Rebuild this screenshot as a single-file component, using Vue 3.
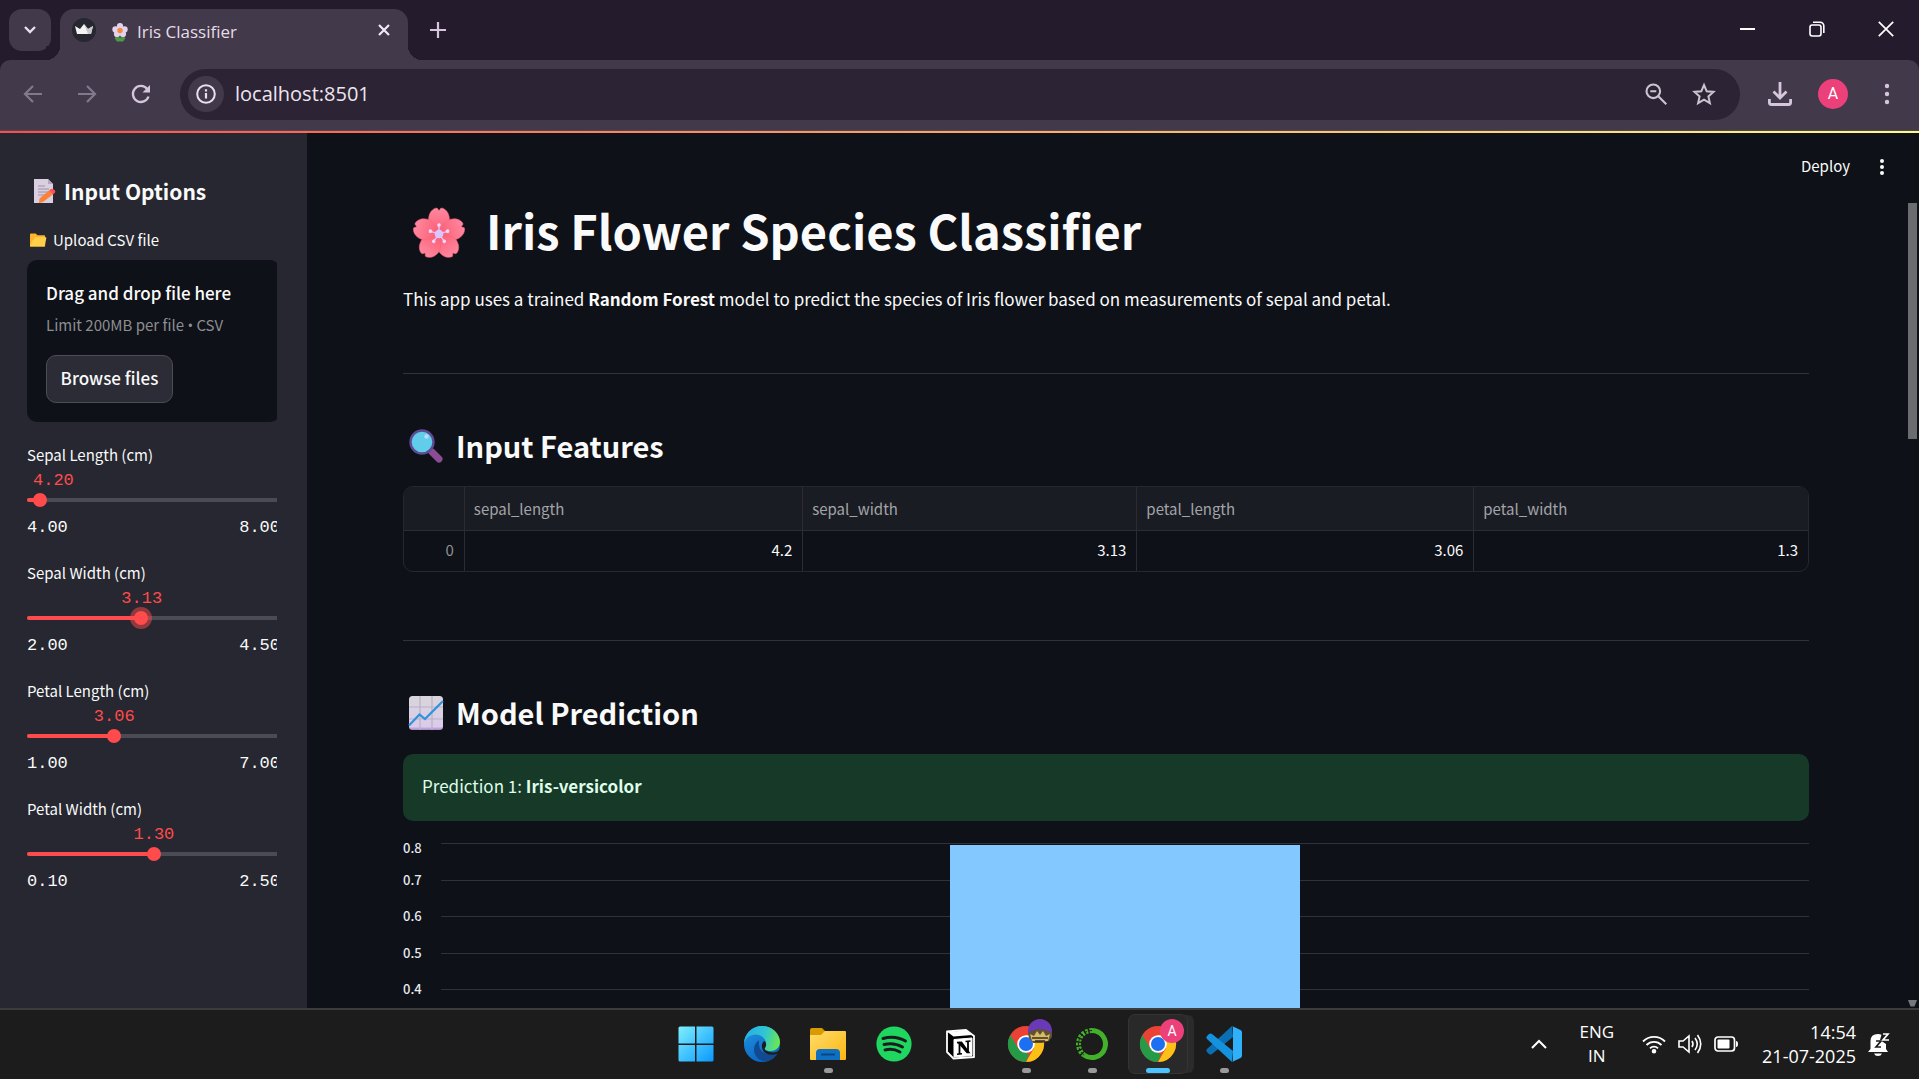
<script setup>
import { reactive } from 'vue'

const sliders = reactive([
  { id: 'sepal-length', label: 'Sepal Length (cm)', min: 4, max: 8, value: 4.2 },
  { id: 'sepal-width', label: 'Sepal Width (cm)', min: 2, max: 4.5, value: 3.13, active: true },
  { id: 'petal-length', label: 'Petal Length (cm)', min: 1, max: 7, value: 3.06 },
  { id: 'petal-width', label: 'Petal Width (cm)', min: 0.1, max: 2.5, value: 1.3 },
])
const pct = (s) => ((s.value - s.min) / (s.max - s.min)) * 100
const fixed = (n) => Number(n).toFixed(2)

const columns = ['sepal_length', 'sepal_width', 'petal_length', 'petal_width']
const row = ['4.2', '3.13', '3.06', '1.3']
const ticks = ['0.8', '0.7', '0.6', '0.5', '0.4', '0.3', '0.2', '0.1']
const petals = [0, 72, 144, 216, 288]
</script>

<template>
  <div class="screen">
    <header class="tabstrip">
      <button class="tab-search" aria-label="Search tabs">
        <svg width="14" height="10" viewBox="0 0 14 10"><path d="M2 2l5 5 5-5" fill="none" stroke="#e8e0ee" stroke-width="2.4" /></svg>
      </button>
      <div class="tab">
        <svg width="24" height="24" viewBox="0 0 24 24">
          <circle cx="12" cy="12" r="12" fill="#262730" />
          <path d="M3 8l5 3 4-5 4 5 5-3-2 8H5z" fill="#f4f4f4" />
          <path d="M12 6l4 5 5-3-2 8h-3z" fill="#c9c9cb" />
        </svg>
        <svg class="tab-flower" width="16" height="18" viewBox="0 0 16 18">
          <path d="M8 11v6M3 15q3-2 5 1 2-3 5-1l-2 3H5z" fill="#4d9a45" stroke="#4d9a45" />
          <g fill="#e3d3ef"><circle cx="8" cy="3.2" r="3.1" /><circle cx="12.6" cy="6.4" r="3.1" /><circle cx="11" cy="11" r="3.1" /><circle cx="5" cy="11" r="3.1" /><circle cx="3.4" cy="6.4" r="3.1" /></g>
          <circle cx="8" cy="7.5" r="2.7" fill="#f58a3c" />
        </svg>
        <span class="tab-title">Iris Classifier</span>
        <button class="bare tab-close" aria-label="Close tab">
          <svg width="12" height="12" viewBox="0 0 12 12"><path d="M1 1l10 10M11 1L1 11" stroke="#f0eaf4" stroke-width="2.2" /></svg>
        </button>
      </div>
      <button class="bare new-tab" aria-label="New tab">
        <svg width="16" height="16" viewBox="0 0 16 16"><path d="M8 0v16M0 8h16" stroke="#d5c6dd" stroke-width="2.2" /></svg>
      </button>
      <div class="window-buttons">
        <button class="bare" aria-label="Minimize"><svg width="16" height="16" viewBox="0 0 16 16"><path d="M0 8h15" stroke="#fff" stroke-width="2" /></svg></button>
        <button class="bare" aria-label="Restore"><svg width="16" height="16" viewBox="0 0 16 16" fill="none" stroke="#fff" stroke-width="1.6"><rect x="1" y="4" width="11" height="11" rx="2.2" /><path d="M4 1.2h7.2a3.6 3.6 0 0 1 3.6 3.6V12" /></svg></button>
        <button class="bare" aria-label="Close"><svg width="16" height="16" viewBox="0 0 16 16"><path d="M.8.8l14.4 14.4M15.2.8L.8 15.2" stroke="#fff" stroke-width="1.7" /></svg></button>
      </div>
    </header>

    <nav class="toolbar">
      <button class="bare nav" aria-label="Back"><svg width="20" height="20" viewBox="0 0 20 20"><path d="M19 10H2.5M10 2L2 10l8 8" fill="none" stroke="#84798c" stroke-width="2.2" /></svg></button>
      <button class="bare nav" aria-label="Forward"><svg width="20" height="20" viewBox="0 0 20 20"><path d="M1 10h16.500M10 2l8 8-8 8" fill="none" stroke="#84798c" stroke-width="2.2" /></svg></button>
      <button class="bare nav" aria-label="Reload"><svg width="20" height="20" viewBox="0 0 20 20"><path d="M17.500 12.500A8 8 0 1 1 16.200 5" fill="none" stroke="#d5c6dd" stroke-width="2.300" /><path d="M19 1v7.500h-7.500z" fill="#d5c6dd" /></svg></button>
      <div class="address">
        <button class="bare site-info" aria-label="Site information"><svg width="20" height="20" viewBox="0 0 20 20"><circle cx="10" cy="10" r="8.800" fill="none" stroke="#e8e0ee" stroke-width="2" /><path d="M10 9v5.500M10 5.200v2.200" stroke="#e8e0ee" stroke-width="2.200" /></svg></button>
        <input class="url" type="text" value="localhost:8501" aria-label="Address" />
        <button class="bare" aria-label="Zoom"><svg width="22" height="22" viewBox="0 0 22 22" fill="none" stroke="#cbc3d0"><circle cx="8.300" cy="8.300" r="6.800" stroke-width="2.100" /><path d="M5.300 8.300h6M13.300 13.300l8 8" stroke-width="2.100" /></svg></button>
        <button class="bare" aria-label="Bookmark"><svg width="24" height="24" viewBox="0 0 24 24"><path d="M12 3l2.700 6.300 6.800.600-5.100 4.500 1.500 6.700-5.900-3.500-5.900 3.500 1.500-6.700-5.100-4.500 6.800-.600z" fill="none" stroke="#cbc3d0" stroke-width="2" /></svg></button>
      </div>
      <button class="bare download" aria-label="Downloads"><svg width="24" height="24" viewBox="0 0 24 24" fill="none" stroke="#d5c6dd" stroke-width="2.800"><path d="M12 0v15M5.500 9.500L12 16l6.500-6.500M1.400 17v3.500a2 2 0 0 0 2 2h17.200a2 2 0 0 0 2-2V17" /></svg></button>
      <button class="profile" aria-label="Profile">A</button>
      <button class="bare" aria-label="Menu"><svg width="6" height="22" viewBox="0 0 6 22" fill="#d5c6dd"><circle cx="3" cy="3" r="2.200" /><circle cx="3" cy="11" r="2.200" /><circle cx="3" cy="19" r="2.200" /></svg></button>
    </nav>
    <div class="rainbow"></div>

    <div class="app">
      <aside class="sidebar">
        <div class="clip">
          <div class="side-content">
            <h2 class="side-title">
              <svg width="22" height="24" viewBox="0 0 22 24">
                <path d="M0 0h14l5 5v19H0z" fill="#d9cfe1" /><path d="M14 0l5 5h-5z" fill="#b4a6c2" />
                <path d="M4 10h11M4 13h11M4 16h8M4 7h7" stroke="#9c92a8" />
                <path d="M5.500 19.500L15 11.500l3.800 4L9 23l-4 1z" fill="#fb8237" /><path d="M15 11.500l2-1.600q2-.4 4 1.600.800 1.400-.300 2.400l-1.900 1.600z" fill="#ff5257" />
              </svg>
              Input Options
            </h2>
            <label class="upload-label" for="csv-button">
              <svg width="17" height="14" viewBox="0 0 18 14"><path d="M1 0h5l2 2h7q1 0 1 1v11H0V1q0-1 1-1z" fill="#fdb52b" /><path d="M5 4h11.500q1 0 .8 1l-1.600 8q-.2 1-1 1H1q-1 0-.8-1L3 7h1z" fill="#ffcf4a" /></svg>
              Upload CSV file
            </label>
            <section class="uploader">
              <p class="drag">Drag and drop file here</p>
              <p class="limit">Limit 200MB per file <span class="dot">•</span> CSV</p>
              <button id="csv-button" class="browse">Browse files</button>
            </section>
            <div v-for="s in sliders" :key="s.id" class="slider">
              <label :for="s.id">{{ s.label }}</label>
              <output :for="s.id" :style="{ marginLeft: `calc(max(26px, ${pct(s)}%) - 20px)` }">{{ fixed(s.value) }}</output>
              <div class="rail">
                <div class="track"><div class="fill" :style="{ width: pct(s) + '%' }"></div></div>
                <input :id="s.id" v-model.number="s.value" type="range" :class="{ active: s.active }" :min="s.min" :max="s.max" step="0.01" />
              </div>
              <div class="bounds"><span>{{ fixed(s.min) }}</span><span>{{ fixed(s.max) }}</span></div>
            </div>
          </div>
        </div>
      </aside>

      <main class="main">
        <div class="app-header">
          <button class="bare deploy">Deploy</button>
          <button class="bare" aria-label="App menu"><svg width="6" height="18" viewBox="0 0 6 18" fill="#fafafa"><circle cx="3" cy="3" r="2" /><circle cx="3" cy="9" r="2" /><circle cx="3" cy="15" r="2" /></svg></button>
        </div>
        <div class="scroller">
          <div class="page">
            <h1>
              <svg width="54" height="54" viewBox="-27 -31 54 54">
                <defs><linearGradient id="petal" x1="0" y1="0" x2="0" y2="1"><stop offset="0" stop-color="#ff88a0" /><stop offset="1" stop-color="#fb5d72" /></linearGradient></defs>
                <path v-for="a in petals" :key="a" :transform="`rotate(${a})`" d="M0 0C-7-5-12-12-10-18-9-23-5-26-2-26L0-23.500 2-26C5-26 9-23 10-18 12-12 7-5 0 0z" fill="url(#petal)" stroke="#f4647f" stroke-width=".5" />
                <g v-for="a in petals" :key="'s' + a" :transform="`rotate(${a})`"><path d="M0 0v-8" stroke="#e2c6ff" stroke-width="1.300" /><circle cy="-9" r="1.800" fill="#f0d9ff" /></g>
                <circle r="4.300" fill="#dcc5ff" />
              </svg>
              Iris Flower Species Classifier
            </h1>
            <p class="intro">This app uses a trained <strong>Random Forest</strong> model to predict the species of Iris flower based on measurements of sepal and petal.</p>
            <hr />
            <h2>
              <svg width="34" height="34" viewBox="0 -1 34 34">
                <path d="M23 23l7 7" stroke="#8b4c93" stroke-width="7" stroke-linecap="round" />
                <circle cx="13" cy="13" r="11.500" fill="#62cdeb" stroke="#5d4b93" stroke-width="2.400" />
                <circle cx="17.500" cy="7.500" r="2.200" fill="#b9dcfa" />
              </svg>
              Input Features
            </h2>
            <div class="table-frame">
              <table>
                <colgroup><col class="c-index" /><col class="c-a" /><col class="c-b" /><col class="c-c" /><col /></colgroup>
                <thead><tr><th></th><th v-for="c in columns" :key="c" scope="col">{{ c }}</th></tr></thead>
                <tbody><tr><td class="index">0</td><td v-for="(v, i) in row" :key="i">{{ v }}</td></tr></tbody>
              </table>
            </div>
            <hr class="after-block" />
            <h2>
              <svg width="34" height="34" viewBox="0 -1 34 34">
                <defs><linearGradient id="sheet" x1="0" y1="0" x2="0" y2="1"><stop offset="0" stop-color="#d9d5dc" /><stop offset=".9" stop-color="#dacbea" /><stop offset="1" stop-color="#a887c8" /></linearGradient></defs>
                <rect width="34" height="34" rx="3.500" fill="url(#sheet)" />
                <path d="M11 0v34M23 0v34M0 11h34M0 23h34" stroke="#b9b1c2" stroke-width="1.200" />
                <path d="M0 29.500l10.500-11 5.500 4.500L34 5" fill="none" stroke="#2f93dc" stroke-width="2.200" />
              </svg>
              Model Prediction
            </h2>
            <div class="alert" role="alert">Prediction 1: <strong>Iris-versicolor</strong></div>
            <div class="chart">
              <div v-for="t in ticks" :key="t" class="chart-row"><span>{{ t }}</span><i></i></div>
              <div class="plot"><div class="bar"></div></div>
            </div>
          </div>
          <div class="scrollbar">
            <div class="thumb"></div>
            <svg width="10" height="8" viewBox="0 0 10 8"><path d="M0 0h9L6.500 6.500h-4z" fill="#77787c" /></svg>
          </div>
        </div>
      </main>
    </div>

    <footer class="taskbar">
      <span></span>
      <div class="apps">
        <button class="bare task" aria-label="Start"><svg width="36" height="36" viewBox="0 0 36 36"><defs><linearGradient id="win" x1="0" y1="0" x2="1" y2="1"><stop offset="0" stop-color="#7df0fd" /><stop offset="1" stop-color="#0a98ff" /></linearGradient></defs><path d="M2 0.500h15v17H.500V2q0-1.500 1.500-1.500zM18.500.500h15.500q1.500 0 1.500 1.500v15.500h-17zM.500 19h16.500v16.500H2q-1.500 0-1.500-1.500zM18.500 19h17v15q0 1.500-1.500 1.500H18.500z" fill="url(#win)" /></svg></button>
        <button class="bare task" aria-label="Edge"><svg width="36" height="36" viewBox="0 0 36 36">
          <defs>
            <linearGradient id="edgeTop" x1="0" y1=".3" x2="1" y2=".5"><stop offset="0" stop-color="#2aaee6" /><stop offset=".55" stop-color="#2fc5d3" /><stop offset="1" stop-color="#6be84f" /></linearGradient>
            <linearGradient id="edgeBody" x1="0" y1="0" x2=".5" y2="1"><stop offset="0" stop-color="#2196e0" /><stop offset="1" stop-color="#0b65c4" /></linearGradient>
          </defs>
          <circle cx="18" cy="18" r="18" fill="url(#edgeBody)" />
          <path d="M0 18C0 8 8 0 18 0s18 7.500 18 16c0 6-5 9-9.500 9-4 0-6.500-1.500-6.500-2.500 0-.8 2-1.500 2-5 0-5-5-9-10.500-9S1.500 12 0 18z" fill="url(#edgeTop)" />
          <path d="M15 14c-4 3-6 8-4.500 13 1.500 5 6.500 8.500 11.500 8.500 6-1 10-5 12-9-2 1-5 1.500-8 1.500-7 0-12-4-11-14z" fill="#124a91" />
          <path d="M20.500 15c2 2 2 4 1 6-1 1.500-1.500 2.500 1.500 4 5 2.500 10 1.500 13-1.500l1 2-3 2c-8 3-15 0-16-6-.5-3 .5-5.500 2.500-6.500z" fill="#1c1c1c" />
        </svg></button>
        <button class="bare task running" aria-label="File Explorer"><svg width="36" height="36" viewBox="0 0 36 36"><defs><linearGradient id="fold" x1="0" y1="0" x2="1" y2="1"><stop offset="0" stop-color="#ffdc6c" /><stop offset="1" stop-color="#fbb610" /></linearGradient></defs><path d="M0 4q0-2 2-2h10l3 3v6H0z" fill="#d99b00" /><path d="M0 9h11l4-4h20q1 0 1 1v27q0 1-1 1H1q-1 0-1-1z" fill="url(#fold)" /><path d="M6 34v-7q0-4 4-4h16q4 0 4 4v7z" fill="#0f6fc0" /><path d="M11 28.500h14" stroke="#0a4684" stroke-width="2" /></svg></button>
        <button class="bare task" aria-label="Spotify"><svg width="36" height="36" viewBox="0 0 36 36"><circle cx="18" cy="18" r="17.600" fill="#1fd760" /><path d="M7 12.500q12-3.500 22.500 2.500M8 18.500q10-2.500 18.500 2.500M9 24q8-2 15 2" fill="none" stroke="#1c1c1c" stroke-width="3" stroke-linecap="round" /></svg></button>
        <button class="bare task" aria-label="Notion"><svg width="30" height="32" viewBox="0 0 30 32"><path d="M2 3.500L21 2l8 6v21l-20.500 1.500L2 24z" fill="#000" stroke="#fff" stroke-width="1.800" stroke-linejoin="round" /><path d="M2.500 4L21 2.500l6 4.500-18.500 1.500z" fill="#fff" /><path d="M9 11.500l18-1.500v17.500L9 29z" fill="#fff" stroke="#fff" stroke-linejoin="round" /><path d="M14.500 15v11M23 13.500v11" stroke="#000" stroke-width="1.800" /><path d="M13.500 14.500l3-.2 7.500 10.200h-2z" fill="#000" stroke="#000" stroke-width="1.500" /><path d="M12 26.200l5-.400M20.500 13.500l5-.400M12 14.800l3-.2" stroke="#000" stroke-width="1.500" /></svg></button>
        <button class="bare task running" aria-label="Chrome, first profile"><svg width="36" height="36" viewBox="0 0 36 36"><circle cx="18" cy="18" r="18" fill="#ea4335" /><path d="M18 36A18 18 0 0 0 33.600 9H18l7.800 13.500z" fill="#fbc116" /><path d="M2.400 9l7.800 13.500L18 27l3 1-3 8A18 18 0 0 1 2.400 9z" fill="#259b48" /><circle cx="18" cy="18" r="8.800" fill="#fff" /><circle cx="18" cy="18" r="7" fill="#1b6ff0" /></svg>
          <svg class="badge-icon" width="26" height="26" viewBox="0 0 26 26"><circle cx="13" cy="13" r="12" fill="#6a39b5" /><path d="M1 15q12-8 24 0v4l-3 4-8 2H6l-4-5z" fill="#5f5138" /><path d="M3 16l4 2 3-5 3 4 3-4 3 5 4-2-2 7H5z" fill="#d8bd63" /><path d="M5 20h16M8 23h10" stroke="#3d2c24" stroke-width="1.500" /></svg></button>
        <button class="bare task running" aria-label="Anaconda"><svg width="34" height="34" viewBox="0 0 34 34"><path d="M17 3.500a13.500 13.500 0 1 1-8 24.400" fill="none" stroke="#43b02a" stroke-width="5" /><path d="M17 3.500A13.500 13.500 0 0 0 9 27.900" fill="none" stroke="#43b02a" stroke-width="5" stroke-dasharray="2.500 1.500" /><path d="M17 3.500A13.500 13.500 0 0 0 9 27.900" fill="none" stroke="#1c1c1c" stroke-width="1" stroke-dasharray="3 2" /></svg></button>
        <button class="bare task running current" aria-label="Chrome"><svg width="36" height="36" viewBox="0 0 36 36"><circle cx="18" cy="18" r="18" fill="#ea4335" /><path d="M18 36A18 18 0 0 0 33.600 9H18l7.800 13.500z" fill="#fbc116" /><path d="M2.400 9l7.800 13.500L18 27l3 1-3 8A18 18 0 0 1 2.400 9z" fill="#259b48" /><circle cx="18" cy="18" r="8.800" fill="#fff" /><circle cx="18" cy="18" r="7" fill="#1b6ff0" /></svg>
          <span class="badge">A</span></button>
        <button class="bare task running" aria-label="VS Code"><svg width="36" height="36" viewBox="0 0 36 36"><path d="M26 0L1 23q-1.500 1.500 0 3l2 2q1.500 1 3 0L27 11z" fill="#0b6fb4" /><path d="M26 36L1 13q-1.500-1.500 0-3l2-2q1.500-1 3 0L27 25z" fill="#1592dd" /><path d="M26 0l8.500 4q1.500.8 1.500 2.500v23q0 1.700-1.500 2.500L26 36q1 0 1-3V3q0-3-1-3z" fill="#2fb0f8" /></svg></button>
      </div>
      <div class="tray">
        <button class="bare" aria-label="Show hidden icons"><svg width="16" height="10" viewBox="0 0 16 10"><path d="M1 9l7-7 7 7" fill="none" stroke="#fff" stroke-width="2" /></svg></button>
        <div class="lang">ENG<br />IN</div>
        <div class="status">
          <svg width="24" height="20" viewBox="0 0 24 20" fill="none" stroke="#fff" stroke-width="1.800"><path d="M1 7.500a15.500 15.500 0 0 1 22 0M4.500 11a10.500 10.500 0 0 1 15 0M8 14.300a5.600 5.600 0 0 1 8 0" /><circle cx="12" cy="17.300" r="1.400" fill="#fff" /></svg>
          <svg width="24" height="20" viewBox="0 0 24 20" fill="none" stroke="#fff" stroke-width="1.600"><path d="M1 7h4l6-5v16l-6-5H1zM14 7q2 3 0 6M17 4q4.500 6 0 12M19.500 1q6.500 9 0 18" /></svg>
          <svg width="24" height="16" viewBox="0 0 24 16"><rect x="1" y="1" width="19.500" height="14" rx="3" fill="none" stroke="#fff" stroke-width="1.700" /><rect x="3.500" y="3.500" width="12" height="9" rx="1" fill="#fff" /><path d="M22 5v6q2 0 2-3t-2-3z" fill="#fff" /></svg>
        </div>
        <div class="clock">14:54<br />21-07-2025</div>
        <svg width="22" height="24" viewBox="0 0 22 24"><path d="M2.500 17V9q0-7 7.500-7 2 0 3.500.700L12 8l6 4v5l2 3H0z" fill="#fff" /><path d="M6 21.500h8q-1 2.500-4 2.500t-4-2.500z" fill="#fff" /><path d="M8 9h5l-5 6h5" fill="none" stroke="#1c1c1c" stroke-width="1.700" /><path d="M15 2h5l-5 6h6" fill="none" stroke="#fff" stroke-width="1.700" /></svg>
      </div>
    </footer>
  </div>
</template>

<style>
body { background: #0e1117; }
</style>

<style scoped>
* { box-sizing: border-box; }
.screen {
  display: flex; flex-direction: column; height: 100vh; overflow: hidden;
  font-family: "Noto Sans CJK SC", "Open Sans", sans-serif; color: #fafafa; background: #0e1117;
}
h1, h2, p { margin: 0; }
button, input { font: inherit; color: inherit; }
svg { display: block; flex: none; overflow: visible; }
.bare { display: flex; align-items: center; justify-content: center; padding: 0; border: 0; background: none; }

/* browser chrome */
.tabstrip { position: relative; z-index: 1; display: flex; flex: none; height: 60px; padding: 9px 25px 0 9px; background: #241c2d; font-family: "Open Sans", sans-serif; }
.tab-search { display: flex; align-items: center; justify-content: center; width: 42px; height: 42px; border: 0; border-radius: 13px; background: #42394a; }
.tab { position: relative; display: flex; align-items: center; width: 348px; height: 51px; margin-left: 9px; padding: 0 18px 9px 12px; border-radius: 14px 14px 0 0; background: #42394a; }
.tab::before, .tab::after { content: ""; position: absolute; bottom: 0; width: 14px; height: 14px; }
.tab::before { left: -14px; background: radial-gradient(circle at 0 0, #241c2d 14px, #42394a 14px); }
.tab::after { right: -14px; background: radial-gradient(circle at 100% 0, #241c2d 14px, #42394a 14px); }
.tab-flower { margin: 4px 9px 0 16px; }
.tab-title { flex: 1; font-size: 17px; line-height: 24px; margin-top: 3px; color: #e4dde9; }
.new-tab { height: 42px; margin-left: 22px; }
.window-buttons { display: flex; gap: 53px; height: 40px; margin-left: auto; }
.toolbar { display: flex; align-items: center; flex: none; height: 71px; padding: 0 29px 2px 23px; background: #42394a; border-bottom: 1px solid #4d4653; border-radius: 10px 10px 0 0; box-shadow: 0 -10px #241c2d; }
.nav { width: 20px; margin-right: 34px; }
.nav + .nav + .nav { margin-right: 29px; }
.address { display: flex; align-items: center; flex: 1; height: 51px; padding: 0 24px 0 8px; border-radius: 26px; background: #2c2334; gap: 25px; }
.site-info { width: 36px; height: 36px; border-radius: 50%; background: #42394a; }
.url { flex: 1; min-width: 0; margin-left: -14px; padding: 0; border: 0; outline: 0; background: none; font: 20px/26px "Open Sans", sans-serif; color: #ece6f0; }
.download { margin-left: 28px; }
.profile { width: 30px; height: 30px; margin: 0 36px 0 26px; padding: 0; border: 0; border-radius: 50%; background: #ec407a; color: #fff; font: 16px/30px Roboto, sans-serif; }
.rainbow { flex: none; height: 2px; background: linear-gradient(90deg, #ff4b4b, #fffd80); }

/* application */
.app { display: flex; flex: 1; min-height: 0; }
.sidebar { flex: none; width: 307px; padding: 42px 30px 0 27px; background: #262730; overflow: hidden; }
.clip { overflow: hidden; }
.side-content { width: calc(100% + 3px); }
.side-title { display: flex; align-items: center; gap: 8px; padding-left: 7px; font-size: 21px; line-height: 32px; font-weight: 600; }
.upload-label { display: flex; align-items: center; gap: 6px; margin: 21px 0 8px; padding-left: 3px; font-size: 15px; line-height: 24px; }
.uploader { padding: 21px 19px 19px; border-radius: 10px; background: #0e1117; }
.drag, .browse { font-weight: 500; }
.drag { font-size: 17px; line-height: 24px; }
.limit { margin-top: 8px; font-size: 15px; line-height: 24px; color: #8d8e92; }
.dot { font-family: "Open Sans", sans-serif; }
.browse { display: block; width: 127px; height: 48px; margin-top: 18px; padding: 0 0 4px; border: 1px solid #4b4c55; border-radius: 10px; background: #2b2c36; font-size: 17px; white-space: nowrap; }
.slider { height: 97px; margin-top: 21px; }
.slider label { display: block; font-size: 15px; line-height: 24px; }
.slider output { display: block; margin-top: 3px; color: #ff4b4b; line-height: 22px; }
.slider output, .bounds { font-family: "Liberation Mono", monospace; font-size: 17px; }
.rail { position: relative; height: 14px; padding-top: 5px; margin-top: 1px; }
.track { height: 4px; border-radius: 2px; background: #4a4b55; overflow: hidden; }
.fill { height: 4px; background: #ff4b4b; }
.rail input { position: absolute; top: 0; left: -7px; width: calc(100% + 14px); height: 14px; margin: 0; appearance: none; background: none; }
.rail input::-webkit-slider-thumb { appearance: none; width: 14px; height: 14px; border-radius: 50%; background: #ff4b4b; }
.rail input.active::-webkit-slider-thumb { box-shadow: 0 0 0 4px rgba(255, 75, 75, 0.5); }
.bounds { display: flex; justify-content: space-between; margin-top: 10px; line-height: 22px; }

.main { display: flex; flex: 1; flex-direction: column; min-width: 0; }
.app-header { display: flex; align-items: center; justify-content: flex-end; flex: none; gap: 29px; height: 70px; padding: 0 34px 2px 0; }
.deploy { padding-bottom: 2px; font-size: 15px; line-height: 24px; }
.scroller { display: flex; flex: 1; min-height: 0; }
.page { flex: 1; min-width: 0; padding: 0 96px; overflow: hidden; }
h1, .page h2 { display: flex; align-items: center; white-space: nowrap; }
h1 { gap: 20px; padding-left: 9px; font-size: 47px; line-height: 54px; font-weight: 700; }
.page h2 { gap: 13px; padding-left: 6px; font-size: 29px; line-height: 40px; font-weight: 600; }
.intro { margin-top: 27px; font-size: 17px; line-height: 30px; }
hr { height: 1px; margin: 59px 0 51px; border: 0; background: #31333b; }
hr.after-block { margin-top: 68px; }
.table-frame { margin-top: 21px; border: 1px solid #26282e; border-radius: 10px; overflow: hidden; }
table { width: 100%; table-layout: fixed; border-collapse: collapse; font-size: 15px; }
.c-index { width: 4.3%; }
.c-a { width: 24.1%; }
.c-b { width: 23.8%; }
.c-c { width: 24%; }
th, td { padding: 0 10px 0 9px; border-left: 1px solid #2b2d33; line-height: 24px; font-weight: 400; }
th:first-child, td:first-child { border-left: 0; }
th { height: 43px; padding-top: 1px; border-bottom: 1px solid #2b2d33; background: #1a1c24; text-align: left; color: #a3a4a8; }
td { height: 41px; padding-bottom: 1px; text-align: right; }
td.index { color: #8f9095; }
.alert { margin-top: 22px; padding: 17px 19px 20px; border-radius: 10px; background: #173928; color: #dffde9; font-size: 17px; line-height: 30px; }
.chart { position: relative; display: flex; flex-direction: column; height: 292px; margin-top: 22px; }
.chart-row { display: flex; flex: 1; }
.chart-row span { width: 38px; margin-top: -9px; font-size: 13px; line-height: 18px; font-weight: 500; color: #e6eaf1; }
.chart-row:first-child span { margin-top: -4px; }
.chart-row i { flex: 1; height: 1px; background: #2f323b; }
.plot { position: absolute; inset: 2px 0 0 38px; }
.bar { width: 25.6%; height: 100%; margin-left: 37.2%; background: #83c9ff; }
.scrollbar { display: flex; flex: none; flex-direction: column; justify-content: space-between; width: 14px; padding-left: 3px; }
.thumb { width: 9px; height: 236px; background: #6b6c70; }

/* taskbar */
.taskbar { display: grid; grid-template-columns: 1fr auto 1fr; align-items: center; flex: none; height: 71px; padding: 0 0 2px 1px; border-top: 2px solid #3c3c3c; background: #1c1c1c; font-family: "Open Sans", sans-serif; color: #fff; }
.apps { display: flex; gap: 6px; }
.task { position: relative; width: 60px; height: 60px; border-radius: 7px; }
.task.running::after { content: ""; position: absolute; bottom: 1px; left: 26px; width: 9px; height: 5px; border-radius: 3px; background: #9a9a9a; }
.task.current { background: #292929; border: 1px solid #343434; box-shadow: 7px 0 0 -1px #2b2b2b; }
.task.current::after { left: 17px; bottom: 0; width: 24px; background: #4cc2ff; }
.badge, .badge-icon { position: absolute; top: 4px; left: 31px; }
.badge { width: 24px; height: 24px; border-radius: 50%; background: #ec407a; color: #fff; font: 14px/24px Roboto, sans-serif; }
.tray { display: flex; align-items: center; justify-content: flex-end; padding-right: 29px; font-size: 17px; line-height: 24px; }
.lang { margin: 0 28px 0 32px; text-align: center; }
.status { display: flex; align-items: center; gap: 12px; margin-right: 24px; }
.clock { margin-right: 12px; font-size: 18px; text-align: right; }
</style>
